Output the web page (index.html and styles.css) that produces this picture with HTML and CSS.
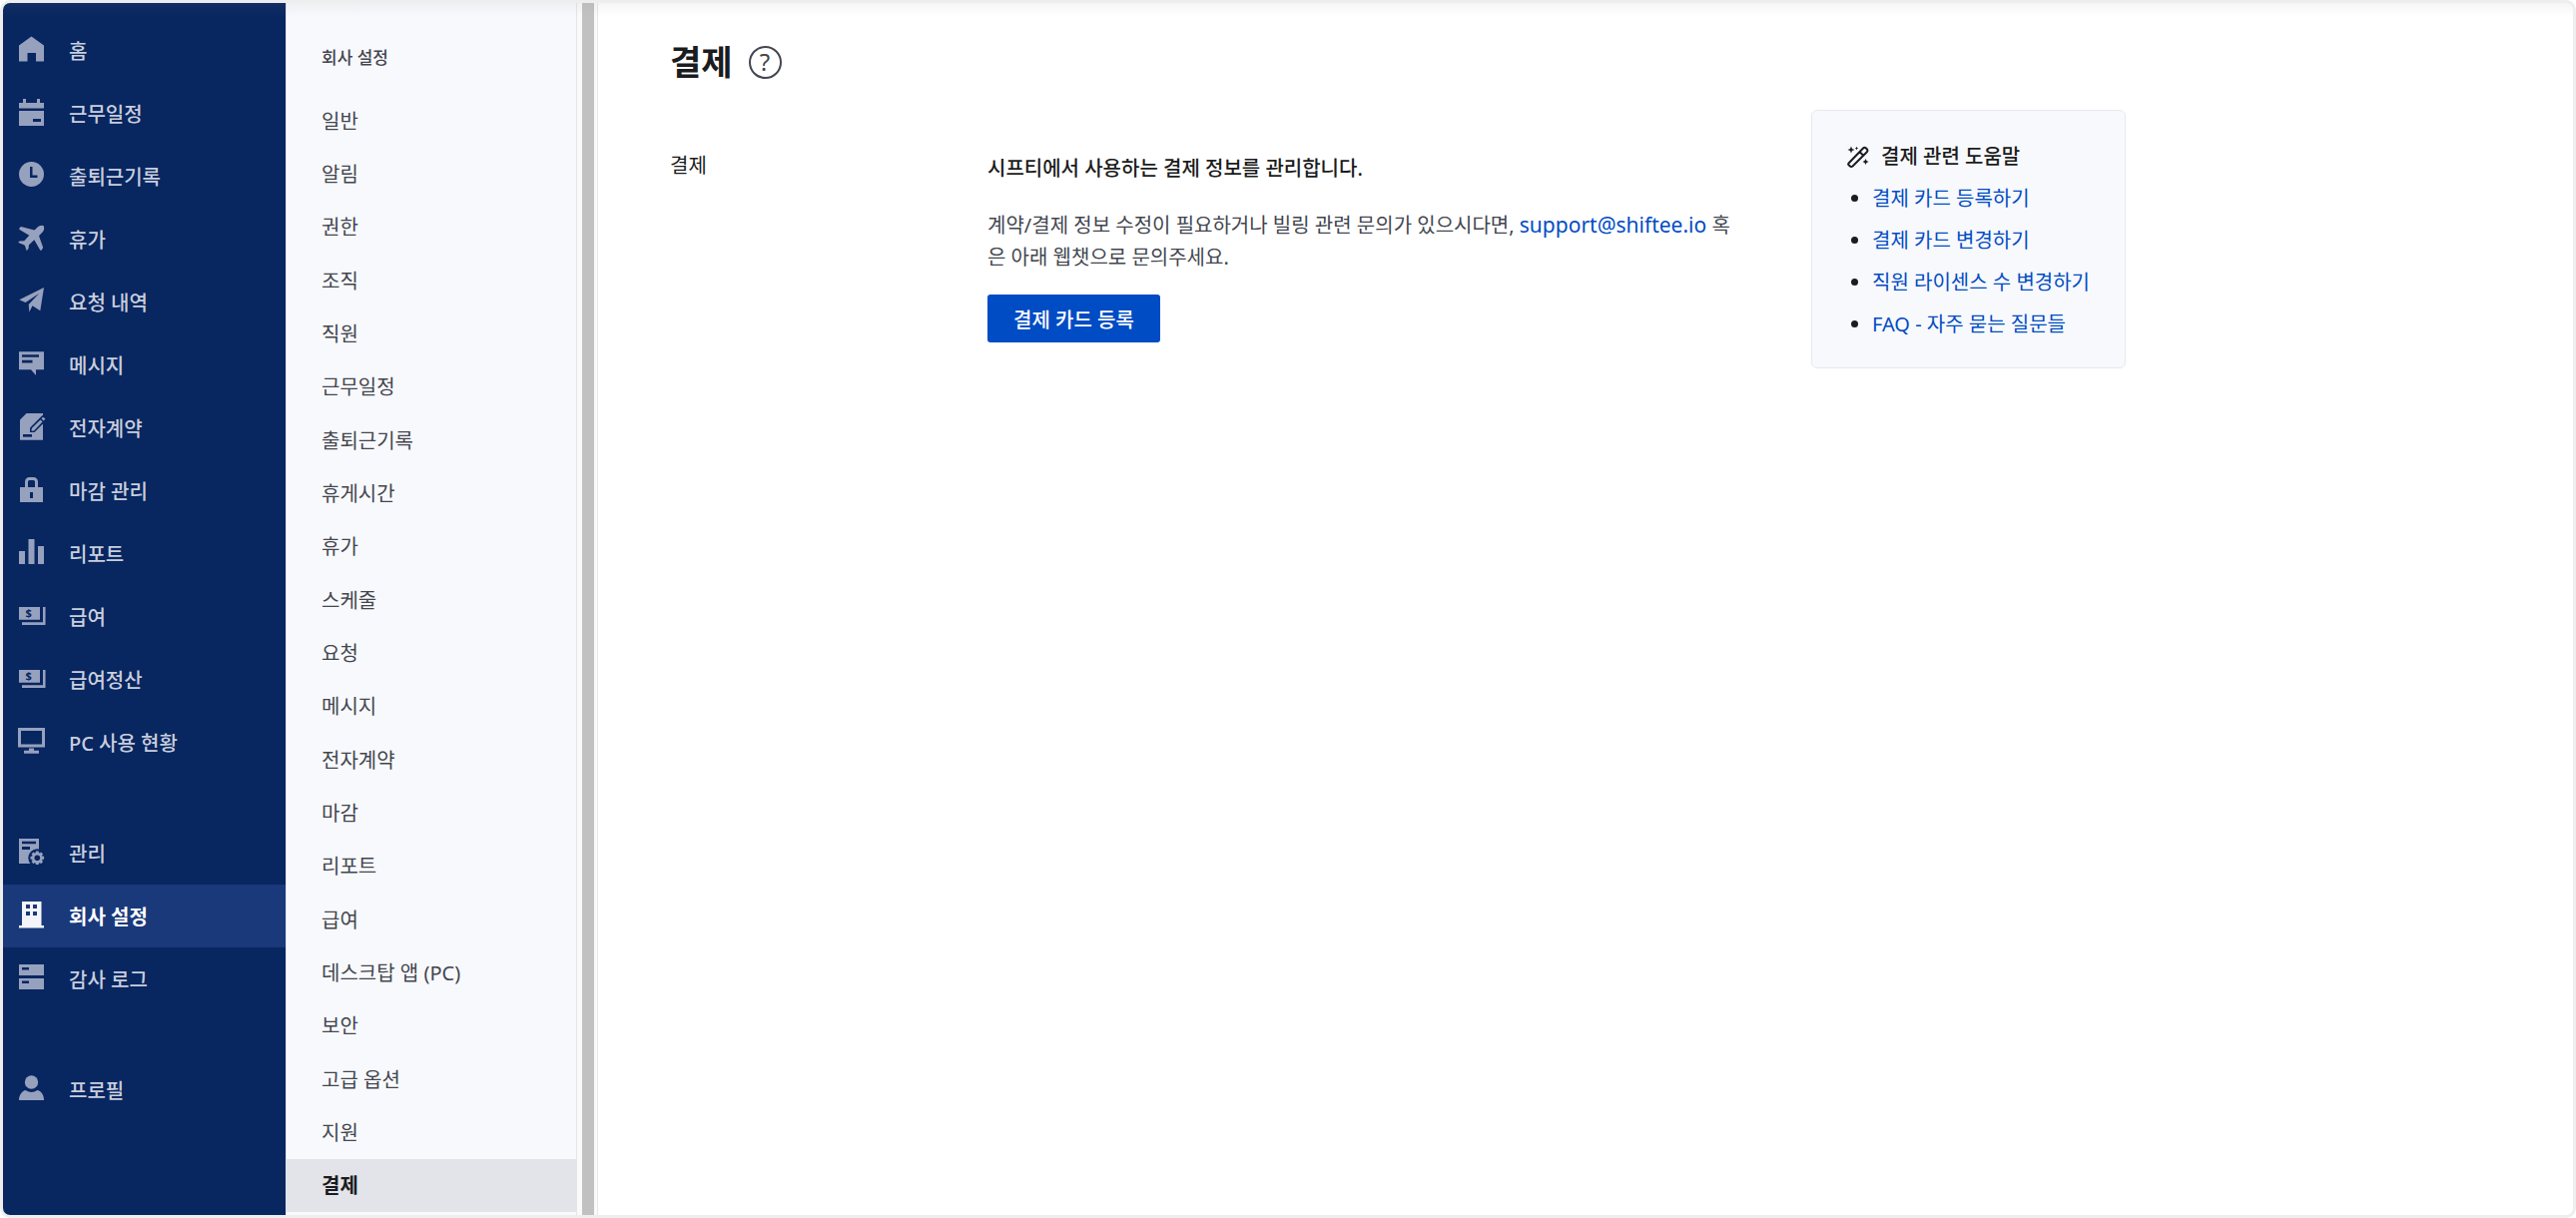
FILE: index.html
```html
<!DOCTYPE html>
<html lang="ko">
<head>
    <meta charset="UTF-8">
    <meta name="viewport" content="width=device-width, initial-scale=1.0">
    <title>회사 설정 - 결제</title>
    <link rel="stylesheet" href="styles.css">
</head>
<body>
    <div class="app">
        <nav class="sidebar" aria-label="메인">
            <a class="nav-item" href="#">
                <svg class="icon" viewBox="0 0 27 27"><path d="M13.5 0.5L26 9.5V25.5H18V17H9.5V25.5H1V9.5z"/></svg>
                홈
            </a>
            <a class="nav-item" href="#">
                <svg class="icon" viewBox="0 0 27 27"><path d="M5 0h3v4h11V0h3v4h4v5.500H1V4h4zM1 12h25v15H1z"/><path class="cut" d="M15 20h8v3h-8z"/></svg>
                근무일정
            </a>
            <a class="nav-item" href="#">
                <svg class="icon" viewBox="0 0 27 27"><circle cx="13.500" cy="12.500" r="12.500"/><path class="cut" d="M12 5h2.500v8.500h5V16H12z"/></svg>
                출퇴근기록
            </a>
            <a class="nav-item" href="#">
                <svg class="icon" viewBox="0 0 27 27"><path d="M1.300 3.500L3 2L16.500 5.500L20.500 1.800Q22 0.700 24.500 0.700Q26.500 1 26.200 3.500Q26.200 5.500 25 7L21 11.300L25.200 23L23.300 26L22.200 25.500L16.300 15.300L11 20.200L10.500 24L8.700 26.300L7 21L6 20.300L0.300 18L1.300 16.500L6.300 16.300L11.300 10.700L1.500 5z"/></svg>
                휴가
            </a>
            <a class="nav-item" href="#">
                <svg class="icon" viewBox="0 0 27 27"><path d="M26 0L22.300 23.300L14.500 18.300L11.300 24.500L10.700 17L21 6L7.500 15L1.300 12.300z"/></svg>
                요청 내역
            </a>
            <a class="nav-item" href="#">
                <svg class="icon" viewBox="0 0 27 27"><path d="M1 1.300h25v18h-8V25l-5-5.700H1z"/><path class="cut" d="M4 4.300h17v2.500H4zM4 9.700h10.500v2.800H4z"/></svg>
                메시지
            </a>
            <a class="nav-item" href="#">
                <svg class="icon" viewBox="0 0 27 27"><path d="M8.500 0H25v26.700H2V6.500z"/><path class="cut" d="M5 21h9v2.700H5z"/><path class="cut" d="M12 19v-4.500L24.500 2l5 4L16.500 19z"/><path d="M13.500 17.700l.3-2.700 8.700-8.600 2 2-8.500 9zM23.500 5.300l1.600-1.600 2.400 1.900-1.900 1.800z"/></svg>
                전자계약
            </a>
            <a class="nav-item" href="#">
                <svg class="icon" viewBox="0 0 27 27"><path d="M2 11h23v15H2z"/><path class="line" d="M8.500 11V5.500a3 3 0 0 1 3-3h4a3 3 0 0 1 3 3V11"/><path class="cut" d="M12 16h3v6h-3z"/></svg>
                마감 관리
            </a>
            <a class="nav-item" href="#">
                <svg class="icon" viewBox="0 0 27 27"><path d="M1 12h6v13H1zM10.500 0h6v25h-6zM20 7h6v18h-6z"/></svg>
                리포트
            </a>
            <a class="nav-item" href="#">
                <svg class="icon" viewBox="0 0 27 27"><path d="M1 5h21v12.700H1zM25 5h2.500v18H4v-2.700h21z"/><text class="cut money" x="10.700" y="15">$</text></svg>
                급여
            </a>
            <a class="nav-item" href="#">
                <svg class="icon" viewBox="0 0 27 27"><path d="M1 5h21v12.700H1zM25 5h2.500v18H4v-2.700h21z"/><text class="cut money" x="10.700" y="15">$</text></svg>
                급여정산
            </a>
            <a class="nav-item" href="#">
                <svg class="icon" viewBox="0 0 27 27"><path class="line" d="M1.500 1.500h24V18h-24z"/><path d="M11 20.500h5v2.200h5v3H6v-3h5z"/></svg>
                PC 사용 현황
            </a>

            <a class="nav-item group-start" href="#">
                <svg class="icon" viewBox="0 0 27 27"><path d="M1 0h20v25H1z"/><path class="cut" d="M4 2.700h14v2.500H4zM4 8h8v3H4z"/><circle class="cut" cx="19.300" cy="19.300" r="9"/><circle cx="19.300" cy="19.300" r="5.500"/><path class="gear" d="M19.300 12.500v13.600M12.500 19.300h13.600M14.500 14.500l9.600 9.600M24.100 14.500l-9.600 9.600"/><circle class="cut" cx="19.300" cy="19.300" r="2.800"/></svg>
                관리
            </a>
            <a class="nav-item active" href="#" aria-current="page">
                <svg class="icon" viewBox="0 0 27 27"><path d="M4 0h19.500v24H26v2.500H1V24h3z"/><path class="cut" d="M8 3h4v4H8zM15 3h4v4h-4zM8 10h4v4H8zM15 10h4v4h-4z"/></svg>
                회사 설정
            </a>
            <a class="nav-item" href="#">
                <svg class="icon" viewBox="0 0 27 27"><path d="M1 0h25v11H1zM1 14h25v11H1z"/><path class="cut" d="M4 3h7v2.500H4zM4 16.500h7V19H4z"/></svg>
                감사 로그
            </a>

            <a class="nav-item group-start" href="#">
                <svg class="icon" viewBox="0 0 27 27"><circle cx="13.500" cy="7" r="6.700"/><path d="M1 25c0-6 4-9.500 6.500-10 4 2.500 8 2.500 12 0 3 .5 6.500 4 6.500 10z"/></svg>
                프로필
            </a>
        </nav>

        <nav class="submenu" aria-label="회사 설정">
            <h2>회사 설정</h2>
            <ul>
                <li><a href="#">일반</a></li>
                <li><a href="#">알림</a></li>
                <li><a href="#">권한</a></li>
                <li><a href="#">조직</a></li>
                <li><a href="#">직원</a></li>
                <li><a href="#">근무일정</a></li>
                <li><a href="#">출퇴근기록</a></li>
                <li><a href="#">휴게시간</a></li>
                <li><a href="#">휴가</a></li>
                <li><a href="#">스케줄</a></li>
                <li><a href="#">요청</a></li>
                <li><a href="#">메시지</a></li>
                <li><a href="#">전자계약</a></li>
                <li><a href="#">마감</a></li>
                <li><a href="#">리포트</a></li>
                <li><a href="#">급여</a></li>
                <li><a href="#">데스크탑 앱 (PC)</a></li>
                <li><a href="#">보안</a></li>
                <li><a href="#">고급 옵션</a></li>
                <li><a href="#">지원</a></li>
                <li><a class="active" href="#" aria-current="page">결제</a></li>
            </ul>
        </nav>
        <div class="scrollbar"><div class="thumb"></div></div>

        <main class="content">
            <header class="page-title">
                <h1>결제</h1>
                <button class="help-button" type="button">?</button>
            </header>
            <div class="columns">
                <h2 class="section-label">결제</h2>
                <section class="billing">
                    <h3>시프티에서 사용하는 결제 정보를 관리합니다.</h3>
                    <p>계약/결제 정보 수정이 필요하거나 빌링 관련 문의가 있으시다면, <a class="mail" href="mailto:support@shiftee.io">support@shiftee.io</a> 혹은 아래 웹챗으로 문의주세요.</p>
                    <button class="primary" type="button">결제 카드 등록</button>
                </section>
                <aside class="help-card">
                    <h3>
                        <svg class="wand" viewBox="0 0 22 22"><path d="M1.500 17.500L16 2.500Q17.500 1 19 2.500L20 3.500Q21 5 19.800 6.200L5.500 20.500Q4 21.500 2.700 20.300L1.600 19.300Q.8 18.500 1.500 17.500zM12.500 6l4 4"/><path class="star" d="M4 .5l1 2.500 2.500 1L5 5 4 7.500 3 5 .5 4 3 3zM18.500 13l1 2 2 1-2 1-1 2-1-2-2-1 2-1zM9.500 .8l.6 1.100 1.100.6-1.100.6-.6 1.100-.6-1.100-1.100-.6 1.100-.6z"/></svg>
                        결제 관련 도움말
                    </h3>
                    <ul>
                        <li><a href="#">결제 카드 등록하기</a></li>
                        <li><a href="#">결제 카드 변경하기</a></li>
                        <li><a href="#">직원 라이센스 수 변경하기</a></li>
                        <li><a href="#">FAQ - 자주 묻는 질문들</a></li>
                    </ul>
                </aside>
            </div>
        </main>
    </div>
</body>
</html>
```

FILE: styles.css
```css
* {
    box-sizing: border-box;
}
body {
    margin: 0;
    font-family: "Noto Sans", "Noto Sans CJK KR", sans-serif;
    font-size: 20px;
    line-height: 32px;
    color: #1b1c20;
    background-color: white;
}
h1, h2, h3, p, ul {
    margin: 0;
    padding: 0;
}
a {
    color: #004cc4;
    text-decoration: none;
}
.app {
    position: relative;
    display: flex;
    min-height: 100vh;
    border: 3px solid #eeeeee;
    border-radius: 10px;
    overflow: hidden;
}
/* soft shade under the top edge */
.app::before {
    content: "";
    position: absolute;
    inset: 0 0 auto;
    height: 14px;
    background: linear-gradient(rgba(136, 136, 136, 0.08), rgba(136, 136, 136, 0));
    pointer-events: none;
}

/* sidebar */
.sidebar {
    --bg: #082660;
    flex: 0 0 283px;
    padding-top: 16px;
    background-color: var(--bg);
}
.nav-item {
    display: flex;
    align-items: center;
    gap: 24px;
    height: 63px;
    padding: 2px 0 0 15px;
    color: #c8cedd;
    font-weight: 500;
}
.nav-item.active {
    --bg: #1a397b;
    background-color: var(--bg);
    color: white;
    font-weight: 700;
}
.group-start {
    margin-top: 48px;
}
.icon {
    width: 27px;
    height: 27px;
    flex: none;
    margin-bottom: 4px;
    overflow: visible;
    color: #96a1be;
    fill: currentColor;
}
.active .icon {
    color: #f4f5f8;
}
.icon .cut {
    fill: var(--bg);
}
.icon .line, .icon .gear {
    fill: none;
    stroke: currentColor;
    stroke-width: 3;
}
.icon .money {
    font-size: 11px;
    font-weight: 700;
    text-anchor: middle;
}

/* submenu */
.submenu {
    display: flex;
    flex-direction: column;
    flex: 0 0 292px;
    padding-bottom: 3px;
    border-left: 1px solid #dfe2ea;
    border-right: 1px solid #e4e5e8;
    background-color: #f8f9fc;
}
.submenu h2 {
    padding: 39px 35px 20px;
    font-size: 17px;
    font-weight: 500;
    color: #43464f;
}
.submenu ul {
    display: flex;
    flex-direction: column;
    flex: 1;
    list-style: none;
}
.submenu li {
    display: flex;
    flex: 1;
}
.submenu a {
    display: flex;
    align-items: center;
    flex: 1;
    padding: 2px 35px 0;
    color: #43464f;
}
.submenu a.active {
    background-color: #e3e4e9;
    color: #1b1c20;
    font-weight: 700;
}
.scrollbar {
    flex: 0 0 21px;
    padding: 0 3px 0 5px;
    border-right: 1px solid #e8e8e8;
    background-color: #fafafa;
}
.thumb {
    height: 100%;
    background-color: #c1c1c1;
}

/* content */
.content {
    flex: 1;
    padding: 35px 72px;
}
.page-title {
    display: flex;
    align-items: center;
    gap: 16px;
    height: 48px;
}
.page-title h1 {
    font-size: 34px;
    font-weight: 700;
}
.help-button {
    width: 33px;
    height: 33px;
    padding: 0;
    border: 2px solid #43464f;
    border-radius: 50%;
    background: none;
    font-family: inherit;
    font-size: 24px;
    line-height: 28px;
    color: #43464f;
}
.columns {
    display: grid;
    grid-template-columns: 318px 1fr 315px;
    align-items: start;
    max-width: 1458px;
    margin-top: 24px;
}
.section-label {
    padding-top: 40px;
    font-size: 20px;
    font-weight: 400;
}
.billing {
    padding: 43px 80px 0 0;
}
.billing h3 {
    margin-bottom: 24px;
    font-size: 20px;
    font-weight: 500;
}
.billing p {
    margin-bottom: 21px;
    color: #43464f;
}
.mail {
    font-size: 21px;
}
.primary {
    height: 48px;
    padding: 0 26px;
    border: 0;
    border-radius: 3px;
    background-color: #004cc4;
    color: white;
    font-family: inherit;
    font-size: 20px;
    font-weight: 500;
}
.help-card {
    padding: 30px 20px 27px 35px;
    border: 1px solid #e8e9ee;
    border-radius: 6px;
    background-color: #f8f9fc;
}
.help-card h3 {
    display: flex;
    align-items: center;
    gap: 12px;
    font-size: 20px;
    font-weight: 500;
}
.wand {
    width: 22px;
    height: 22px;
    fill: none;
    stroke: #1b1c20;
    stroke-width: 2;
}
.wand .star {
    fill: #1b1c20;
    stroke: none;
}
.help-card ul {
    padding-left: 25px;
}
.help-card li {
    margin-top: 10px;
}
```
